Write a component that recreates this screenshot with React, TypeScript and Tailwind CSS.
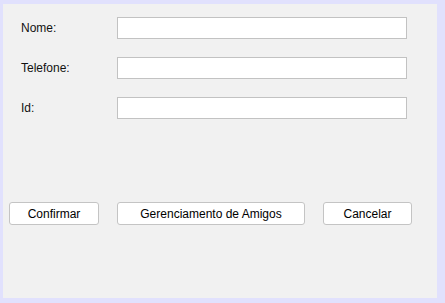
const campos = ["Nome:", "Telefone:", "Id:"];

function Botao({ texto, largura }: { texto: string; largura: string }) {
  return (
    <button
      type="button"
      className={`${largura} h-[23px] rounded-[3px] border border-[#c4c4c4] bg-white text-[12px] leading-none text-black`}
    >
      {texto}
    </button>
  );
}

export default function App() {
  return (
    <div className="h-[303px] w-[445px] bg-[#e1e1fd] pl-[3px] pt-[4px]" style={{ fontFamily: '"Liberation Sans", Arial, sans-serif' }}>
      <div className="flex h-[294px] w-[434px] flex-col bg-[#f1f1f1] pt-[13px]">
        <div className="flex flex-col gap-[18px] pl-[18px]">
          {campos.map((c) => (
            <div key={c} className="flex h-[22px] items-center">
              <span className="w-[96px] text-[12px] text-[#111]">{c}</span>
              <input
                type="text"
                className="h-[22px] w-[290px] border border-[#c2c2c2] bg-white outline-none"
              />
            </div>
          ))}
        </div>
        <div className="mt-[83px] flex gap-[18px] pl-[6px]">
          <Botao texto="Confirmar" largura="w-[90px]" />
          <Botao texto="Gerenciamento de Amigos" largura="w-[188px]" />
          <Botao texto="Cancelar" largura="w-[89px]" />
        </div>
      </div>
    </div>
  );
}
